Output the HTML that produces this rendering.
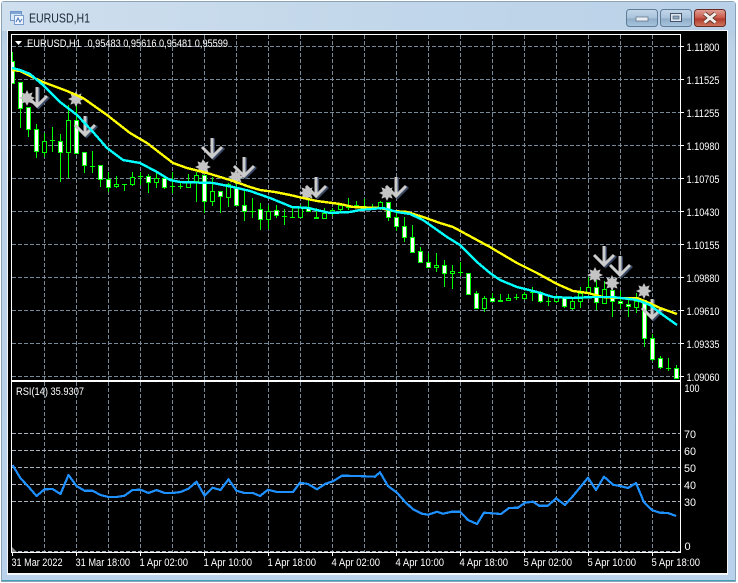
<!DOCTYPE html>
<html><head><meta charset="utf-8"><title>EURUSD,H1</title>
<style>
html,body{margin:0;padding:0;background:#fff;width:738px;height:583px;overflow:hidden}
svg{display:block}
text{font-family:"Liberation Sans",sans-serif;fill:#fff;font-size:11px}
</style></head><body>
<svg width="738" height="583" viewBox="0 0 738 583" xmlns="http://www.w3.org/2000/svg">
<defs>
<linearGradient id="tb" x1="0" y1="0" x2="0" y2="1"><stop offset="0" stop-color="#a9c3da"/><stop offset=".08" stop-color="#bdd3e8"/><stop offset="1" stop-color="#b9d1ea"/></linearGradient>
<linearGradient id="hl" x1="0" y1="0" x2="1" y2="0"><stop offset="0" stop-color="#cfdfee"/><stop offset=".5" stop-color="#c2d7ea"/><stop offset="1" stop-color="#b9d1e8"/></linearGradient>
<linearGradient id="bb" x1="0" y1="0" x2="0" y2="1"><stop offset="0" stop-color="#c3d6e8"/><stop offset=".5" stop-color="#a9c3dc"/><stop offset=".55" stop-color="#8fadc9"/><stop offset="1" stop-color="#a8c6df"/></linearGradient>
<linearGradient id="rb" x1="0" y1="0" x2="0" y2="1"><stop offset="0" stop-color="#e0a298"/><stop offset=".5" stop-color="#c9584a"/><stop offset=".55" stop-color="#b03a2c"/><stop offset="1" stop-color="#cf7a60"/></linearGradient>
<clipPath id="pc"><rect x="11" y="35" width="669" height="345"/></clipPath>
<path id="s" d="M0-8 1.800-4.200 5.600-5.600 4.200-1.800 8 0 4.200 1.800 5.600 5.600 1.800 4.200 0 8-1.800 4.200-5.600 5.600-4.200 1.800-8 0-4.200-1.800-5.600-5.600-1.800-4.200z" fill="#c4c4c4"/>
<g id="a" fill="none" stroke-linejoin="miter"><path d="M1-20V-1M-9.500-10.500 1 0 11.500-10.500" stroke="#3a4a66" stroke-width="2.800" transform="translate(.5 .5)"/><path d="M0-20V-1M-10-11 0-1 10-11" stroke="#cccccc" stroke-width="3"/></g>
</defs>

<!-- window frame -->
<rect x="0" y="0" width="738" height="583" fill="#fff"/>
<path d="M4 1.500H732Q735.500 1.500 735.500 5V581.500H1.500V5Q1.500 1.500 4 1.500z" fill="url(#tb)" stroke="#8aa3b6"/>
<rect x="2" y="2" width="733" height="29" fill="url(#hl)"/>
<path d="M2 580.500H735" stroke="#3f9fb5" stroke-width="1"/>
<rect x="7" y="30" width="721" height="545" fill="#f4f7fa"/>
<rect x="8" y="31" width="719" height="542" fill="#000"/>

<!-- title icon -->
<g shape-rendering="crispEdges">
<rect x="10.500" y="11.500" width="11" height="9" fill="#d8e8f8" stroke="#6d95c6"/>
<rect x="14.500" y="15.500" width="9" height="9" fill="#eef5fc" stroke="#7a9ccb"/>
<rect x="11" y="12" width="10" height="2" fill="#7fa6d6"/>
</g>
<path d="M16 22 18 18 20 22 22 19" fill="none" stroke="#4a78b8" stroke-width="1"/>
<text x="29" y="22.500" style="font-size:12.500px;fill:#1c2733" textLength="61" lengthAdjust="spacingAndGlyphs">EURUSD,H1</text>

<!-- buttons -->
<rect x="626.500" y="9.500" width="31" height="17" rx="3" fill="url(#bb)" stroke="#5f7c98"/>
<rect x="636" y="17" width="12" height="4" fill="#e8eef4" stroke="#5a6a7c" stroke-width=".7"/>
<rect x="660.500" y="9.500" width="31" height="17" rx="3" fill="url(#bb)" stroke="#5f7c98"/>
<rect x="670.500" y="13.500" width="11" height="8" fill="#dfe8f0" stroke="#44546a"/>
<rect x="673" y="16" width="6" height="3" fill="#8ea9c2" stroke="#44546a" stroke-width=".6"/>
<rect x="694.500" y="9.500" width="31" height="17" rx="3" fill="url(#rb)" stroke="#6a2a24"/>
<path d="M704.500 13.500 715.500 22.500M715.500 13.500 704.500 22.500" stroke="#4c2a26" stroke-width="4.400"/>
<path d="M704.500 13.500 715.500 22.500M715.500 13.500 704.500 22.500" stroke="#f2eeea" stroke-width="3"/>

<!-- grid -->
<g fill="none" stroke="#778899" stroke-dasharray="4 2" shape-rendering="crispEdges">
<path d="M12 46.500H680M12 79.500H680M12 112.500H680M12 145.500H680M12 178.500H680M12 211.500H680M12 244.500H680M12 277.500H680M12 310.500H680M12 343.500H680M12 376.500H680"/>
<path d="M44.500 35V380M76.500 35V380M108.500 35V380M140.500 35V380M172.500 35V380M204.500 35V380M236.500 35V380M268.500 35V380M300.500 35V380M332.500 35V380M364.500 35V380M396.500 35V380M428.500 35V380M460.500 35V380M492.500 35V380M524.500 35V380M556.500 35V380M588.500 35V380M620.500 35V380M652.500 35V380"/>
<path d="M44.500 382V552M76.500 382V552M108.500 382V552M140.500 382V552M172.500 382V552M204.500 382V552M236.500 382V552M268.500 382V552M300.500 382V552M332.500 382V552M364.500 382V552M396.500 382V552M428.500 382V552M460.500 382V552M492.500 382V552M524.500 382V552M556.500 382V552M588.500 382V552M620.500 382V552M652.500 382V552"/>
<path stroke="#a8b2bc" d="M12 433.500H680M12 450.500H680M12 467.500H680M12 484.500H680M12 501.500H680M12 551.500H680"/>
</g>

<!-- candles -->
<g clip-path="url(#pc)" shape-rendering="crispEdges">
<path fill="none" stroke="#00ff00" d="M12.500 52V83M20.500 82V128M28.500 107V137M36.500 124V158M44.500 133V157M52.500 127V152M60.500 134V182M68.500 105V178M76.500 105V153M84.500 152V173M92.500 151V173M100.500 165V187M108.500 172V192M116.500 176V188M124.500 184V191M132.500 172V186M140.500 172V185M148.500 174V193M156.500 173V188M164.500 178V189M172.500 172V193M180.500 182V189M188.500 174V188M196.500 172V202M204.500 175V213M212.500 177V206M220.500 191V213M228.500 183V207M236.500 180V205M244.500 190V221M252.500 198V218M260.500 203V230M268.500 205V229M276.500 205V218M284.500 209V225M292.500 207V218M300.500 205V217M308.500 198V211M316.500 208V218M324.500 208V219M332.500 208V216M340.500 203V212M348.500 198V210M356.500 201V207M364.500 199V208M372.500 204V209M380.500 201V210M388.500 202V221M396.500 213V231M404.500 217V242M412.500 225V253M420.500 247V262M428.500 253V267M436.500 253V272M444.500 260V287M452.500 265V289M460.500 262V276M468.500 273V294M476.500 291V309M484.500 296V312M492.500 293V301M500.500 294V302M508.500 294V301M516.500 294V300M524.500 292V300M532.500 287V301M540.500 291V303M548.500 297V306M556.500 295V303M564.500 297V308M572.500 297V310M580.500 287V308M588.500 277V295M596.500 280V310M604.500 281V303M612.500 280V317M620.500 291V309M628.500 297V317M636.500 293V313M644.500 300V347M652.500 334V361M660.500 356V369M668.500 358V371M676.500 365V378"/>
<path fill="none" stroke="#00ff00" d="M50 140.500h5M90 166.500h5M122 184.500h5M138 176.500h5M170 186.500h5M178 186.500h5M250 211.500h5M282 216.500h5M290 217.500h5M314 218.500h5M314 217.500h5M346 207.500h5M354 205.500h5M362 206.500h5M370 207.500h5M458 272.500h5M498 301.500h5M498 300.500h5M514 297.500h5M530 292.500h5M546 301.500h5M666 368.500h5"/>
<path fill="#000" stroke="#00ff00" d="M42.500 141.500h4V152.500h-4zM66.500 120.500h4V152.500h-4zM114.500 184.500h4V186.500h-4zM130.500 177.500h4V184.500h-4zM154.500 178.500h4V182.500h-4zM186.500 182.500h4V187.500h-4zM194.500 175.500h4V181.500h-4zM210.500 191.500h4V201.500h-4zM226.500 184.500h4V197.500h-4zM266.500 211.500h4V219.500h-4zM298.500 207.500h4V217.500h-4zM322.500 213.500h4V218.500h-4zM330.500 210.500h4V212.500h-4zM338.500 205.500h4V209.500h-4zM378.500 202.500h4V207.500h-4zM434.500 265.500h4V267.500h-4zM450.500 271.500h4V273.500h-4zM482.500 298.500h4V308.500h-4zM506.500 298.500h4V300.500h-4zM522.500 294.500h4V298.500h-4zM554.500 297.500h4V301.500h-4zM570.500 301.500h4V308.500h-4zM578.500 293.500h4V301.500h-4zM586.500 287.500h4V293.500h-4zM602.500 289.500h4V303.500h-4zM634.500 301.500h4V307.500h-4z"/>
<path fill="#fff" stroke="#00ff00" d="M11.500 61.500h3V83.500h-3zM18.500 82.500h4V108.500h-4zM26.500 107.500h4V129.500h-4zM34.500 129.500h4V151.500h-4zM58.500 141.500h4V152.500h-4zM74.500 120.500h4V153.500h-4zM82.500 152.500h4V165.500h-4zM98.500 165.500h4V179.500h-4zM106.500 179.500h4V187.500h-4zM146.500 176.500h4V182.500h-4zM162.500 178.500h4V187.500h-4zM202.500 175.500h4V201.500h-4zM218.500 191.500h4V196.500h-4zM234.500 187.500h4V205.500h-4zM242.500 205.500h4V211.500h-4zM258.500 209.500h4V219.500h-4zM274.500 210.500h4V215.500h-4zM306.500 207.500h4V211.500h-4zM386.500 202.500h4V217.500h-4zM394.500 217.500h4V226.500h-4zM402.500 226.500h4V237.500h-4zM410.500 237.500h4V252.500h-4zM418.500 251.500h4V262.500h-4zM426.500 262.500h4V267.500h-4zM442.500 265.500h4V273.500h-4zM466.500 273.500h4V294.500h-4zM474.500 293.500h4V308.500h-4zM490.500 298.500h4V301.500h-4zM538.500 292.500h4V301.500h-4zM562.500 297.500h4V306.500h-4zM594.500 287.500h4V302.500h-4zM610.500 290.500h4V301.500h-4zM618.500 301.500h4V303.500h-4zM626.500 304.500h4V306.500h-4zM642.500 300.500h4V338.500h-4zM650.500 338.500h4V359.500h-4zM658.500 358.500h4V367.500h-4zM674.500 368.500h4V378.500h-4z"/>
</g>

<!-- arrows and stars -->
<use href="#a" x="37" y="107"/><use href="#a" x="85" y="136"/><use href="#a" x="212" y="158"/><use href="#a" x="244" y="177"/><use href="#a" x="316" y="197"/><use href="#a" x="396" y="197"/><use href="#a" x="604" y="266"/><use href="#a" x="620" y="276"/><use href="#a" x="652" y="319"/>
<use href="#s" x="27" y="98"/><use href="#s" x="76" y="99"/><use href="#s" x="203" y="167"/><use href="#s" x="236" y="177"/><use href="#s" x="307" y="193"/><use href="#s" x="387" y="193"/><use href="#s" x="595" y="275"/><use href="#s" x="612" y="283"/><use href="#s" x="644" y="291"/>

<!-- moving averages -->
<g fill="none" stroke-width="2.400" stroke-linejoin="round" clip-path="url(#pc)" shape-rendering="crispEdges">
<path stroke="#ffff00" d="M12 70 20 71 28 75 43 82 67 91 83 98 107 115 130 133 147 143 160 153 173 163 187 168 207 173 230 180 250 187 260 190 275 192 290 195 303 198 317 201 340 204 353 207 380 208 393 211 407 212 423 217 440 223 453 227 477 240 490 247 500 253 517 263 537 273 557 284 573 291 588 293 603 297 617 298 637 298 647 302 660 308 677 314"/>
<path stroke="#00ffff" d="M12 68 20 70 30 74 43 85 60 102 77 115 93 132 107 148 123 160 140 163 157 172 170 180 180 182 213 183 233 187 250 191 270 198 292 207 308 208 330 213 350 212 360 210 383 208 397 212 410 214 423 220 447 237 460 245 477 262 490 273 500 280 517 287 537 292 553 297 573 298 593 297 613 297 637 300 650 305 663 315 677 325"/>
</g>

<!-- RSI -->
<path fill="none" stroke="#1e90ff" stroke-width="2.200" stroke-linejoin="round" shape-rendering="crispEdges" d="M12.500 465 20.500 478.300 28.500 486.700 36.500 496 44.500 489.300 52.500 489 60.500 494 68.500 475 76.500 486 84.500 490.700 92.500 490.700 100.500 495 108.500 497 116.500 497 124.500 495.700 132.500 490 140.500 489.700 148.500 493 156.500 490 164.500 493 172.500 493 180.500 492 188.500 488.700 196.500 481.700 204.500 495.700 212.500 487.700 220.500 490 228.500 479.300 236.500 490.700 244.500 493 253 493 260 496 268 489.700 277 492 293 492 300 482.700 308 484 317 489.300 325 484 333 481.300 342 475.700 357 476 375 476.700 380 472.300 388 486 397 492.700 405 501.700 413 509.300 422 513.700 428 514.700 437 511.700 443 513.700 452 511.700 460 511.700 468 520 477 524 484 512.700 501 514 509 508 518 507.700 525 502.700 533 501.700 539 505.700 548 505.700 556 498.300 565 505 573 496 588 477.700 596 490 604 476.700 613 484.700 620 486 628 488 636 483 644 502.300 652 510 660 512.700 668 513 676 516"/>
<path d="M12 547 17 552H12z" fill="#8a8a8a"/>

<!-- frame lines -->
<g fill="none" stroke="#fff" shape-rendering="crispEdges">
<path d="M11.500 34.500H680.500V552.500H11.500z"/>
<path d="M11 380.500H681M11 381.500H681"/>
<path d="M681 46.500h3M681 79.500h3M681 112.500h3M681 145.500h3M681 178.500h3M681 211.500h3M681 244.500h3M681 277.500h3M681 310.500h3M681 343.500h3M681 376.500h3"/>
<path d="M12.500 553v3M76.500 553v3M140.500 553v3M204.500 553v3M268.500 553v3M332.500 553v3M396.500 553v3M460.500 553v3M524.500 553v3M588.500 553v3M652.500 553v3"/>
</g>

<!-- legend -->
<path d="M15 41h7l-3.500 4z" fill="#fff"/>
<text x="27" y="47" textLength="54" lengthAdjust="spacingAndGlyphs">EURUSD,H1</text>
<text x="87.500" y="47" textLength="140.500" lengthAdjust="spacingAndGlyphs">0,95483 0,95616 0,95481 0,95599</text>
<text x="16" y="395" textLength="68" lengthAdjust="spacingAndGlyphs">RSI(14) 35.9307</text>

<!-- price axis -->
<g>
<text x="686.500" y="51" textLength="33" lengthAdjust="spacingAndGlyphs">1.11800</text>
<text x="686.500" y="84" textLength="33" lengthAdjust="spacingAndGlyphs">1.11525</text>
<text x="686.500" y="117" textLength="33" lengthAdjust="spacingAndGlyphs">1.11255</text>
<text x="686.500" y="150" textLength="33" lengthAdjust="spacingAndGlyphs">1.10980</text>
<text x="686.500" y="183" textLength="33" lengthAdjust="spacingAndGlyphs">1.10705</text>
<text x="686.500" y="216" textLength="33" lengthAdjust="spacingAndGlyphs">1.10430</text>
<text x="686.500" y="249" textLength="33" lengthAdjust="spacingAndGlyphs">1.10155</text>
<text x="686.500" y="282" textLength="33" lengthAdjust="spacingAndGlyphs">1.09880</text>
<text x="686.500" y="315" textLength="33" lengthAdjust="spacingAndGlyphs">1.09610</text>
<text x="686.500" y="348" textLength="33" lengthAdjust="spacingAndGlyphs">1.09335</text>
<text x="686.500" y="381" textLength="33" lengthAdjust="spacingAndGlyphs">1.09060</text>
<text x="684.500" y="392" textLength="15" lengthAdjust="spacingAndGlyphs">100</text>
<text x="684" y="438" textLength="12" lengthAdjust="spacingAndGlyphs">70</text>
<text x="684" y="455" textLength="12" lengthAdjust="spacingAndGlyphs">60</text>
<text x="684" y="472" textLength="12" lengthAdjust="spacingAndGlyphs">50</text>
<text x="684" y="489" textLength="12" lengthAdjust="spacingAndGlyphs">40</text>
<text x="684" y="506" textLength="12" lengthAdjust="spacingAndGlyphs">30</text>
<text x="684.500" y="550">0</text>
</g>

<!-- time axis -->
<g>
<text x="11.500" y="566" textLength="51" lengthAdjust="spacingAndGlyphs">31 Mar 2022</text>
<text x="75.500" y="566" textLength="54.500" lengthAdjust="spacingAndGlyphs">31 Mar 18:00</text>
<text x="139.500" y="566" textLength="48.500" lengthAdjust="spacingAndGlyphs">1 Apr 02:00</text>
<text x="203.500" y="566" textLength="48.500" lengthAdjust="spacingAndGlyphs">1 Apr 10:00</text>
<text x="267.500" y="566" textLength="48.500" lengthAdjust="spacingAndGlyphs">1 Apr 18:00</text>
<text x="331.500" y="566" textLength="48.500" lengthAdjust="spacingAndGlyphs">4 Apr 02:00</text>
<text x="395.500" y="566" textLength="48.500" lengthAdjust="spacingAndGlyphs">4 Apr 10:00</text>
<text x="459.500" y="566" textLength="48.500" lengthAdjust="spacingAndGlyphs">4 Apr 18:00</text>
<text x="523.500" y="566" textLength="48.500" lengthAdjust="spacingAndGlyphs">5 Apr 02:00</text>
<text x="587.500" y="566" textLength="48.500" lengthAdjust="spacingAndGlyphs">5 Apr 10:00</text>
<text x="651.500" y="566" textLength="48.500" lengthAdjust="spacingAndGlyphs">5 Apr 18:00</text>
</g>
</svg>
</body></html>
